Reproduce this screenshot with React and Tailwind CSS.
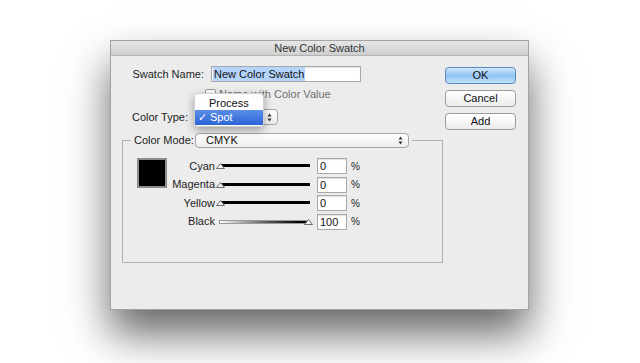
import React from "react";

function Thumb({ right }) {
  return (
    <svg
      width="9"
      height="6"
      viewBox="0 0 9 6"
      className={"absolute top-[0px] " + (right ? "right-[-3px]" : "left-[-3px]")}
    >
      <path d="M0.5 5.5 L4.5 0.5 L8.5 5.5 Z" fill="#f4f4f4" stroke="#6a6a6a" strokeWidth="1" />
    </svg>
  );
}

function SliderRow({ label, value, black }) {
  return (
    <div className="flex items-center h-[16px]">
      <div className="w-[48px] text-right text-[#1e1e1e]">{label}</div>
      <div className="relative ml-[4px] w-[91px] h-[6px]">
        {black ? (
          <div className="absolute left-0 right-0 top-[1px] h-[4px] border border-[#9a9a9a] bg-gradient-to-r from-white to-black" />
        ) : (
          <div className="absolute left-[1px] right-0 top-[1px] h-[3px] bg-black" />
        )}
        <Thumb right={black} />
      </div>
      <div className="ml-[7px] w-[30px] h-[16px] bg-white border border-[#a8a8a8] shadow-[inset_0_1px_1px_rgba(0,0,0,0.12)] px-[2px] leading-[14px] text-[#111]">
        {value}
      </div>
      <div className="ml-[4px] text-[10px] text-[#222]">%</div>
    </div>
  );
}

function Stepper() {
  return (
    <svg width="5" height="9" viewBox="0 0 5 9" className="shrink-0">
      <path d="M2.5 0.5 L4.5 3.5 L0.5 3.5 Z" fill="#333" />
      <path d="M2.5 8.5 L4.5 5.5 L0.5 5.5 Z" fill="#333" />
    </svg>
  );
}

export default function App() {
  return (
    <div
      className="w-[640px] h-[363px] bg-white pl-[110px] pt-[40px] overflow-hidden text-[11px] leading-[13px]"
      style={{ fontFamily: '"Liberation Sans", Arial, sans-serif' }}
    >
      <div className="relative w-[419px] h-[270px] bg-[#ececec] border border-[#a3a3a3] shadow-[0_24px_40px_rgba(0,0,0,0.6)] flex flex-col">
        {/* title bar */}
        <div className="h-[15px] shrink-0 bg-gradient-to-b from-[#e6e6e6] to-[#cfcfcf] border-b border-[#b3b3b3] flex items-center justify-center text-[11px] text-[#333]">
          New Color Swatch
        </div>

        <div className="flex">
          {/* left column */}
          <div className="w-[334px] flex flex-col">
            {/* swatch name */}
            <div className="flex items-center mt-[10px] h-[16px]">
              <div className="w-[93px] text-right text-[#1e1e1e]">Swatch Name:</div>
              <div className="ml-[7px] w-[150px] h-[16px] bg-white border border-[#a8a8a8] shadow-[inset_0_1px_1px_rgba(0,0,0,0.12)] flex items-center px-[1px]">
                <span className="bg-[#b4d4fc] px-[1px] leading-[14px] text-[#111]">New Color Swatch</span>
              </div>
            </div>

            {/* checkbox */}
            <div className="flex items-center mt-[6px] h-[12px] pl-[94px]">
              <div className="w-[11px] h-[11px] bg-white border border-[#9a9a9a] rounded-[2px]" />
              <div className="ml-[3px] text-[#6e6e6e]">Name with Color Value</div>
            </div>

            {/* color type */}
            <div className="flex items-center mt-[9px] h-[16px]">
              <div className="w-[77px] text-right text-[#1e1e1e]">Color Type:</div>
              <div className="ml-[7px] w-[83px] h-[16px] rounded-[4px] border border-[#a5a5a5] bg-gradient-to-b from-white to-[#ededed] flex items-center justify-end pr-[5px]">
                <Stepper />
              </div>
            </div>

            {/* group box */}
            <fieldset className="mt-[8px] ml-[11px] w-[321px] border border-[#b0b0b0] p-0 m-0">
              <legend className="ml-[8px] px-[3px] flex items-center">
                <span className="w-[61px] text-[#1e1e1e]">Color Mode:</span>
                <div className="w-[214px] h-[15px] rounded-[4px] border border-[#a5a5a5] bg-gradient-to-b from-white to-[#ededed] flex items-center justify-between pl-[10px] pr-[5px]">
                  <span className="text-[#111]">CMYK</span>
                  <Stepper />
                </div>
              </legend>
              <div className="h-[114px] flex pt-[10px] pl-[14px]">
                <div className="w-[30px] h-[30px] border-[2px] border-[#8c8c8c] bg-black shrink-0" />
                <div className="flex flex-col gap-[2.5px]">
                  <SliderRow label="Cyan" value="0" />
                  <SliderRow label="Magenta" value="0" />
                  <SliderRow label="Yellow" value="0" />
                  <SliderRow label="Black" value="100" black />
                </div>
              </div>
            </fieldset>
          </div>

          {/* buttons */}
          <div className="flex flex-col gap-[6px] mt-[11px]">
            <div className="w-[71px] h-[17px] rounded-[4px] border border-[#5b86c0] bg-gradient-to-b from-[#d3e9fc] via-[#8fc3f3] to-[#c2e2fd] flex items-center justify-center text-[#111]">
              OK
            </div>
            <div className="w-[71px] h-[17px] rounded-[4px] border border-[#9c9c9c] bg-gradient-to-b from-white to-[#ececec] flex items-center justify-center text-[#111]">
              Cancel
            </div>
            <div className="w-[71px] h-[17px] rounded-[4px] border border-[#9c9c9c] bg-gradient-to-b from-white to-[#ececec] flex items-center justify-center text-[#111]">
              Add
            </div>
          </div>
        </div>

        {/* popup menu */}
        <div className="absolute left-[83px] top-[52px] w-[70px] h-[34px] bg-white/95 rounded-[4px] shadow-[0_3px_8px_rgba(0,0,0,0.35)] border border-[#d0d0d0] flex flex-col pt-[2px]">
          <div className="h-[14px] flex items-center pl-[14px] text-[#111]">Process</div>
          <div className="h-[15px] flex items-center bg-gradient-to-b from-[#5a8ee6] to-[#2d64d6] text-white">
            <span className="w-[15px] text-center">✓</span>
            <span>Spot</span>
          </div>
        </div>
      </div>
    </div>
  );
}
